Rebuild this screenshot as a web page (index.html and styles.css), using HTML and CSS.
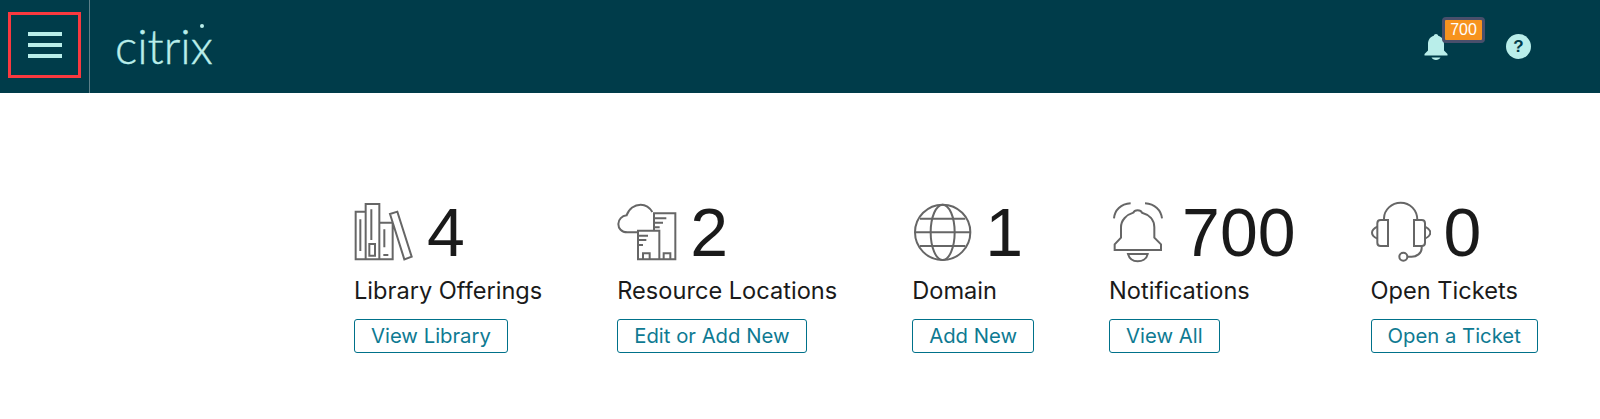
FILE: index.html
```html
<!DOCTYPE html>
<html lang="en">
<head>
    <meta charset="UTF-8">
    <meta name="viewport" content="width=device-width, initial-scale=1.0">
    <title>Citrix Cloud</title>
    <link rel="stylesheet" href="styles.css">
</head>
<body>
    <header class="topbar">
        <div class="menu-cell">
            <button class="menu-btn" aria-label="Menu">
                <span class="menu-line"></span>
                <span class="menu-line"></span>
                <span class="menu-line"></span>
            </button>
        </div>
        <div class="logo">citrix<span class="logo-dot"></span></div>
        <div class="topbar-right">
            <div class="bell-wrap">
                <svg class="top-bell" viewBox="0 0 24 26">
                    <path fill="#b9eeea" d="M12 0c1.2 0 2 .8 2.200 1.800C18 3 20 6 20 10v6.500l3.500 3.500v1.500H.5V20L4 16.500V10c0-4 2-7 5.800-8.200C10 .8 10.800 0 12 0zM7.500 23.500h9c-.8 1.600-2.500 2.500-4.500 2.500s-3.700-.9-4.500-2.500z"/>
                </svg>
                <span class="badge">700</span>
            </div>
            <span class="help">?</span>
        </div>
    </header>

    <main class="stats">
        <section class="stat">
            <div class="stat-top">
                <svg class="stat-icon" viewBox="42 30 180 192">
                    <path d="M47 65H77V208H47zM77 42H118V208H77zM118 98H158V208H118zM150 72L172 65L215 200L193 208zM61 88V183M94 58V150M88 162H105V197H88zM133 118V172M130 195H145"/>
                </svg>
                <span class="stat-num">4</span>
            </div>
            <div class="stat-label">Library Offerings</div>
            <a class="stat-btn">View Library</a>
        </section>
        <section class="stat">
            <div class="stat-top">
                <svg class="stat-icon" viewBox="57 30 180 192">
                    <path d="M118 127H88C70 127 61 115 61 102C61 88 72 78 86 76C92 56 110 44 128 44C143 44 155 52 163 66"/>
                    <path d="M168 120V70H232V208H120V122H184V208M170 85H205M170 98H195M170 112H185M122 137H150M122 150H145M122 165H135M135 208V190H155V208M197 208V190H217V208"/>
                </svg>
                <span class="stat-num">2</span>
            </div>
            <div class="stat-label">Resource Locations</div>
            <a class="stat-btn">Edit or Add New</a>
        </section>
        <section class="stat">
            <div class="stat-top">
                <svg class="stat-icon" viewBox="36 30 180 192">
                    <circle cx="128" cy="127" r="83"/>
                    <ellipse cx="128" cy="127" rx="36" ry="83"/>
                    <path d="M45 127H211M60 86H196M60 168H196"/>
                </svg>
                <span class="stat-num">1</span>
            </div>
            <div class="stat-label">Domain</div>
            <a class="stat-btn">Add New</a>
        </section>
        <section class="stat">
            <div class="stat-top">
                <svg class="stat-icon" viewBox="27 30 180 192">
                    <path d="M100 68C104 58 122 58 126 68C148 74 163 90 163 112V143L183 163V180H44V163L63 143V112C63 90 80 74 100 68Z"/>
                    <path d="M84 192H143C140 208 125 214 113 214C100 214 88 206 84 192Z"/>
                    <path d="M42 85C44 60 62 42 92 40M135 40C165 42 183 60 186 85"/>
                </svg>
                <span class="stat-num">700</span>
            </div>
            <div class="stat-label">Notifications</div>
            <a class="stat-btn">View All</a>
        </section>
        <section class="stat">
            <div class="stat-top">
                <svg class="stat-icon" viewBox="33 30 180 192">
                    <path d="M72 90V85C72 60 95 38 122 38C150 38 172 60 172 90"/>
                    <path d="M84 90V168H62C56 168 52 164 52 158V100C52 94 56 90 62 90Z"/>
                    <path d="M162 90V168H185C191 168 195 164 195 158V100C195 94 191 90 185 90Z"/>
                    <path d="M52 110C42 115 36 122 36 128C36 134 42 141 52 146M195 110C205 115 211 122 211 128C211 134 205 141 195 146"/>
                    <path d="M185 168V175C185 190 170 200 155 200H143"/>
                    <circle cx="130" cy="200" r="12"/>
                </svg>
                <span class="stat-num">0</span>
            </div>
            <div class="stat-label">Open Tickets</div>
            <a class="stat-btn">Open a Ticket</a>
        </section>
    </main>
</body>
</html>
```

FILE: styles.css
```css
body {
    margin: 0;
    font-family: Inter, "Liberation Sans", sans-serif;
    background-color: #ffffff;
    color: #1a1a1a;
}

.topbar {
    display: flex;
    align-items: center;
    height: 93px;
    background-color: #003c4a;
}
.menu-cell {
    width: 90px;
    height: 93px;
    padding: 12px 0 0 8px;
    box-sizing: border-box;
    border-right: 1px solid #5d8089;
}
.menu-btn {
    display: flex;
    flex-direction: column;
    justify-content: center;
    align-items: center;
    gap: 7px;
    width: 73px;
    height: 66px;
    padding: 0;
    box-sizing: border-box;
    border: 3px solid #f9393f;
    background: none;
}
.menu-line {
    display: block;
    width: 34px;
    height: 4px;
    background-color: #b9eeea;
}
.logo {
    position: relative;
    margin-left: 25px;
    font-family: Lato, sans-serif;
    font-weight: 300;
    font-size: 47px;
    -webkit-text-stroke: 0.4px #b9eeea;
    color: #b9eeea;
    line-height: 1;
}
.logo-dot {
    position: absolute;
    right: 9px;
    top: 1px;
    width: 4px;
    height: 4px;
    border-radius: 50%;
    background-color: #b9eeea;
}
.topbar-right {
    display: flex;
    align-items: center;
    gap: 58px;
    margin-left: auto;
    margin-right: 69px;
}
.bell-wrap {
    position: relative;
    width: 24px;
    height: 26px;
}
.top-bell {
    display: block;
    width: 24px;
    height: 26px;
}
.badge {
    position: absolute;
    left: 18px;
    top: -17px;
    width: 37px;
    height: 20px;
    border: 3px solid #494f6b;
    border-radius: 4px;
    background-color: #f7931e;
    color: #ffffff;
    font-family: "Liberation Sans", sans-serif;
    font-size: 16px;
    line-height: 20px;
    text-align: center;
}
.help {
    width: 25px;
    height: 25px;
    border-radius: 50%;
    background-color: #b9eeea;
    color: #003c4a;
    font-family: "Liberation Sans", sans-serif;
    font-weight: 700;
    font-size: 17px;
    line-height: 25px;
    text-align: center;
}

.stats {
    display: flex;
    gap: 75px;
    padding: 107px 0 0 354px;
}
.stat-top {
    display: flex;
    align-items: flex-start;
    gap: 13px;
    height: 64px;
}
.stat-icon {
    width: 60px;
    height: 64px;
    fill: none;
    stroke: #666666;
    stroke-width: 6;
}
.stat-num {
    font-family: "Liberation Sans", sans-serif;
    font-size: 68px;
    line-height: 64px;
}
.stat-label {
    margin-top: 11px;
    font-size: 23.6px;
    line-height: 32px;
}
.stat-btn {
    display: inline-block;
    margin-top: 12px;
    padding: 0 16px;
    border: 1px solid #00718a;
    border-radius: 3px;
    color: #0e7a92;
    font-size: 20.3px;
    line-height: 32px;
}
```
